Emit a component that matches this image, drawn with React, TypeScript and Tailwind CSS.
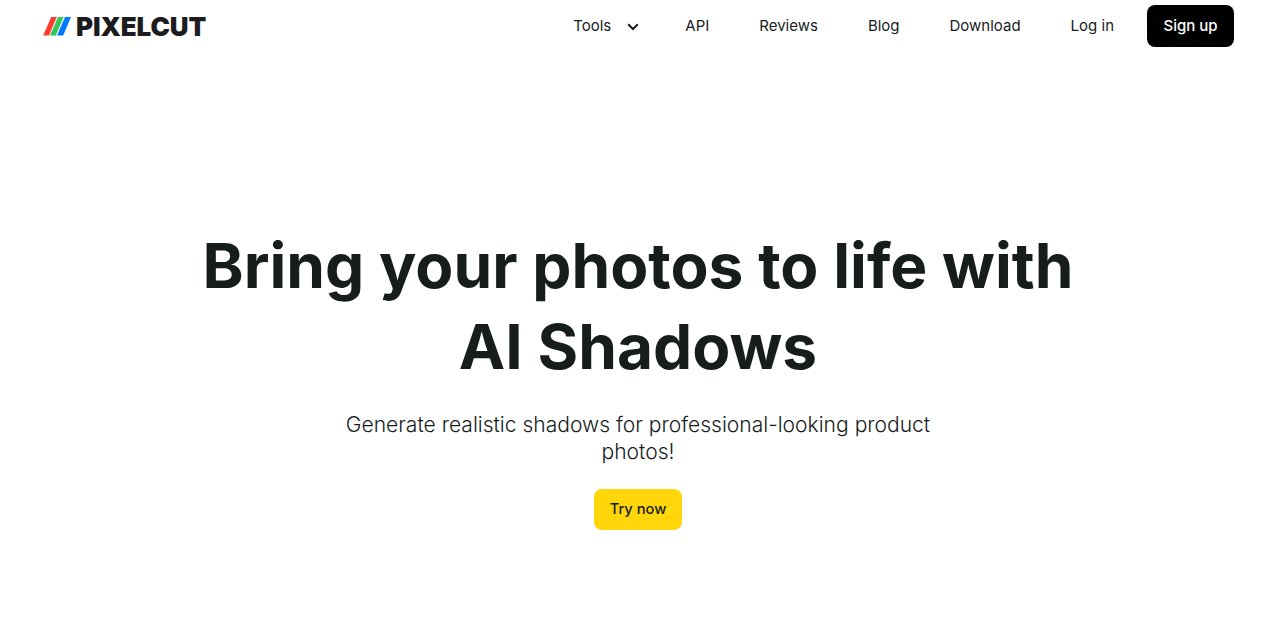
const links = ["API", "Reviews", "Blog", "Download", "Log in"];

function Logo() {
  return (
    <a href="#" className="flex items-center text-[#1c1c1e]" aria-label="Pixelcut">
      <svg width="30" height="20" viewBox="0 0 30 20" className="shrink-0">
        <path d="M8.2 1h5.6L6 19.5H.2z" fill="#ff3b30" />
        <path d="M15 1h5.6l-7.8 18.5H7z" fill="#34c759" />
        <path d="M22 1h6l-7.8 18.5H14z" fill="#007aff" />
      </svg>
      <span className="ml-[3px] pt-px text-[26px] leading-none font-black tracking-[-0.1px]">PIXELCUT</span>
    </a>
  );
}

export default function App() {
  return (
    <div className="h-[630px] overflow-hidden bg-white font-['Inter',sans-serif] text-[#171c1c]">
      <header className="flex h-[52px] items-center justify-between pr-[46px] pl-[43px]">
        <Logo />
        <nav className="flex items-center text-[15px]">
          <button className="mr-[45px] flex items-center gap-[15px] pt-px">
            Tools
            <svg width="14" height="14" viewBox="0 0 14 14" fill="none" stroke="currentColor" strokeWidth="2">
              <path d="M2.2 4.2 7 9l4.8-4.8" />
            </svg>
          </button>
          <div className="flex gap-[50px] pt-px">
            {links.map((link) => (
              <a key={link} href="#">
                {link}
              </a>
            ))}
          </div>
          <a
            href="#"
            className="ml-[33px] flex h-[42px] w-[87px] items-center justify-center rounded-lg bg-black pt-px font-medium text-white"
          >
            Sign up
          </a>
        </nav>
      </header>

      <main className="flex flex-col items-center pt-[173px] pr-1 text-center">
        <h1 className="w-[900px] text-[62.2px] leading-[81px] font-bold">Bring your photos to life with AI Shadows</h1>
        <p className="mt-[25px] w-[620px] text-[21.07px] leading-[26.5px] font-light">
          Generate realistic shadows for professional-looking product photos!
        </p>
        <a
          href="#"
          className="mt-[24px] flex h-[41px] w-[88px] items-center justify-center rounded-lg bg-[#ffd60a] text-[14.7px] font-medium"
        >
          Try now
        </a>
      </main>
    </div>
  );
}
